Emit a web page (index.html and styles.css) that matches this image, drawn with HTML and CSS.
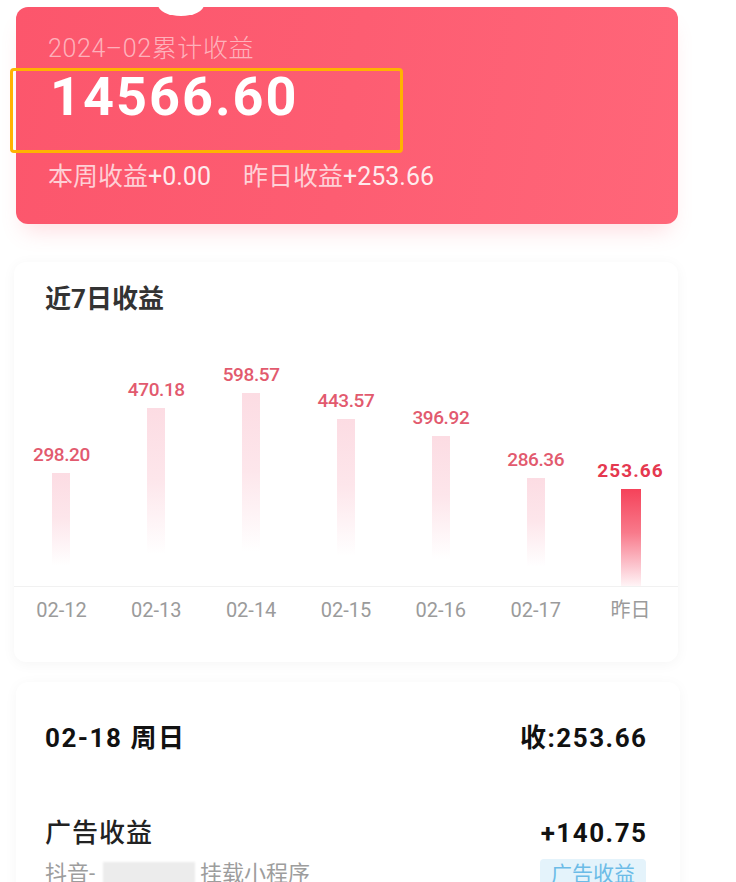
FILE: index.html
```html
<!DOCTYPE html>
<html lang="zh">
<head>
<meta charset="utf-8">
<title>收益</title>
<link rel="stylesheet" href="styles.css">
</head>
<body>
<div class="page">
  <section class="summary">
    <span class="notch"></span>
    <div class="summary-title">2024–02累计收益</div>
    <div class="highlight">
      <div class="total">14566.60</div>
    </div>
    <div class="summary-sub">
      <span class="sub-item">本周收益<b>+0.00</b></span>
      <span class="sub-item">昨日收益<b>+253.66</b></span>
    </div>
  </section>

  <section class="chart-card">
    <h2 class="chart-title">近7日收益</h2>
    <div class="plot">
      <div class="col"><span class="val">298.20</span><span class="bar" style="height:113px"></span></div>
      <div class="col"><span class="val">470.18</span><span class="bar" style="height:178px"></span></div>
      <div class="col"><span class="val">598.57</span><span class="bar" style="height:193px"></span></div>
      <div class="col"><span class="val">443.57</span><span class="bar" style="height:167px"></span></div>
      <div class="col"><span class="val">396.92</span><span class="bar" style="height:150px"></span></div>
      <div class="col"><span class="val">286.36</span><span class="bar" style="height:108px"></span></div>
      <div class="col"><span class="val val-active">253.66</span><span class="bar bar-active" style="height:97px"></span></div>
    </div>
    <div class="dates">
      <span>02-12</span><span>02-13</span><span>02-14</span><span>02-15</span><span>02-16</span><span>02-17</span><span>昨日</span>
    </div>
  </section>

  <section class="detail-card">
    <div class="row row-head">
      <span class="date">02-18 周日</span>
      <span class="sum">收:253.66</span>
    </div>
    <div class="row row-item">
      <span class="item-name">广告收益</span>
      <span class="item-amount">+140.75</span>
    </div>
    <div class="row row-sub">
      <span class="source">抖音-<span class="masked"></span>挂载小程序</span>
      <span class="tag">广告收益</span>
    </div>
  </section>
</div>
</body>
</html>
```

FILE: styles.css
```css
* { box-sizing: border-box; }

html, body {
  margin: 0;
  padding: 0;
  background: #ffffff;
}

body {
  font-family: "Roboto", "Noto Sans CJK SC", sans-serif;
  color: #222;
}

.page {
  height: 882px;
  overflow: hidden;
  padding-top: 7px;
}

/* ---------- summary card ---------- */
.summary {
  position: relative;
  margin-left: 16px;
  width: 662px;
  padding: 27px 0 32px 32px;
  border-radius: 12px;
  background: linear-gradient(100deg, #fc566c 0%, #fd5d72 50%, #ff6679 100%);
  box-shadow: 0 14px 22px -8px rgba(255, 95, 115, 0.22);
}

.notch {
  position: absolute;
  left: 142px;
  top: -14px;
  width: 46px;
  height: 23px;
  border-radius: 50%;
  background: #ffffff;
}

.summary-title {
  font-size: 25px;
  line-height: 30px;
  letter-spacing: 0.6px;
  color: rgba(255, 255, 255, 0.55);
  font-weight: 300;
}

.highlight {
  margin: 4px 0 0 -38px;
  width: 393px;
  height: 85px;
  border: 3px solid #ffb300;
  border-radius: 4px;
  padding-left: 37px;
}

.total {
  font-size: 54px;
  line-height: 52px;
  font-weight: 700;
  letter-spacing: 2px;
  color: #ffffff;
}

.summary-sub {
  margin-top: 9px;
  display: flex;
  gap: 32px;
  font-size: 25px;
  line-height: 30px;
  color: rgba(255, 255, 255, 0.72);
}

.summary-sub b {
  font-weight: 400;
  color: rgba(255, 255, 255, 0.88);
}

/* ---------- chart card ---------- */
.chart-card {
  margin: 38px 0 0 14px;
  width: 664px;
  border-radius: 12px;
  background: #ffffff;
  box-shadow: 0 2px 14px rgba(0, 0, 0, 0.045);
  padding-top: 20px;
}

.chart-title {
  margin: 0;
  padding-left: 31px;
  font-size: 26px;
  line-height: 34px;
  font-weight: 700;
  color: #333;
}

.plot {
  display: grid;
  grid-template-columns: repeat(7, 1fr);
  height: 271px;
  border-bottom: 1px solid #f1f1f1;
}

.col {
  display: flex;
  flex-direction: column;
  align-items: center;
  justify-content: flex-end;
}

.val {
  font-size: 19px;
  line-height: 20px;
  font-weight: 500;
  letter-spacing: -0.4px;
  color: #e25a6e;
  margin-bottom: 8px;
}

.val-active {
  font-weight: 700;
  letter-spacing: 1.1px;
  color: #e5384f;
}

.bar {
  display: block;
  width: 18px;
  background: linear-gradient(180deg, #fcdce3 0%, #fde6eb 40%, rgba(253, 235, 239, 0) 82%);
}

.bar-active {
  width: 20px;
  background: linear-gradient(180deg, #f5425a 0%, #f87a8b 45%, #fcc7d0 80%, #fff4f6 100%);
}

.dates {
  display: grid;
  grid-template-columns: repeat(7, 1fr);
  padding: 11px 0 40px;
  font-size: 20px;
  line-height: 24px;
  color: #9b9b9b;
  text-align: center;
}

/* ---------- detail card ---------- */
.detail-card {
  margin: 20px 0 0 16px;
  width: 664px;
  border-radius: 12px;
  background: #ffffff;
  box-shadow: 0 2px 14px rgba(0, 0, 0, 0.04);
  padding: 38px 34px 30px 29px;
}

.row {
  display: flex;
  justify-content: space-between;
  align-items: center;
}

.row-head {
  font-size: 26px;
  line-height: 36px;
  font-weight: 700;
  color: #111;
}

.row-head .date,
.row-head .sum {
  letter-spacing: 1.5px;
}

.row-head .sum {
  margin-right: -1.5px;
}

.row-item {
  margin-top: 59px;
  font-size: 26px;
  line-height: 36px;
}

.item-name {
  font-weight: 500;
  letter-spacing: 1px;
  color: #222;
}

.item-amount {
  font-weight: 700;
  letter-spacing: 1.5px;
  margin-right: -1.5px;
  color: #111;
}

.row-sub {
  margin-top: 8px;
  font-size: 22px;
  line-height: 30px;
  color: #9d9d9d;
}

.source {
  display: flex;
  align-items: center;
}

.masked {
  display: inline-block;
  width: 92px;
  height: 24px;
  margin: 0 5px 0 8px;
  background: #ececec;
  filter: blur(1px);
}

.tag {
  padding: 0 11px;
  font-size: 21px;
  line-height: 30px;
  border-radius: 4px;
  background: #e4f3fb;
  color: #6cbce7;
}
```
